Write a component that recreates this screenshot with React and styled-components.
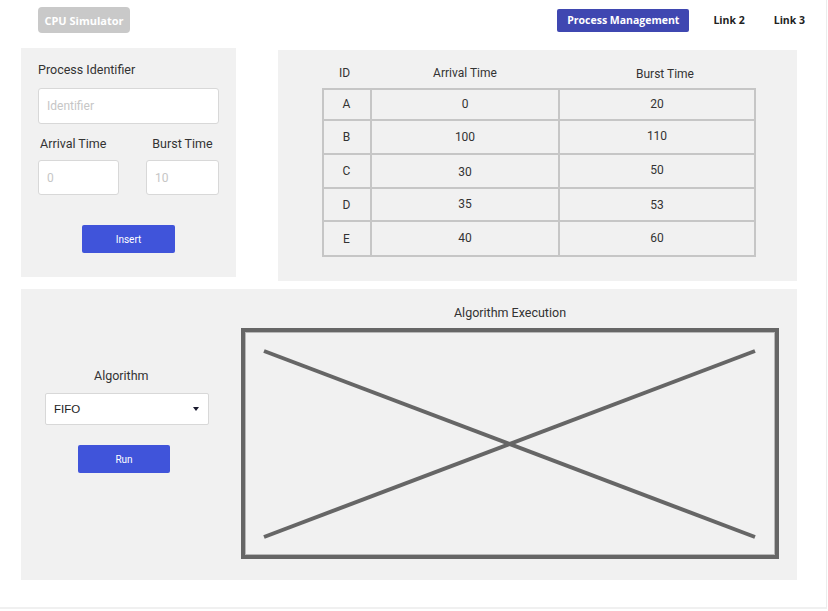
import React from "react";
import styled, { createGlobalStyle } from "styled-components";

const GlobalStyle = createGlobalStyle`
  body {
    margin: 0;
    background: #fff;
    font-family: Roboto, "Liberation Sans", sans-serif;
    color: #333;
  }
`;

const Page = styled.div`
  width: 826px;
  height: 607px;
  border-right: 1px solid #ececec;
  border-bottom: 2px solid #f0f0f0;
`;

const Nav = styled.div`
  display: flex;
  align-items: center;
  height: 40px;
  padding-left: 38px;
  font-family: "Open Sans", "Liberation Sans", sans-serif;
`;

const Brand = styled.div`
  background: #c9c9c9;
  color: #fff;
  font-weight: 700;
  font-size: 11px;
  height: 26px;
  width: 92px;
  border-radius: 4px;
  display: flex;
  align-items: center;
  justify-content: center;
`;

const NavLinks = styled.div`
  margin-left: auto;
  display: flex;
  align-items: center;
  padding-right: 21px;
`;

const NavLink = styled.div`
  font-size: 10.5px;
  font-weight: 700;
  height: 23px;
  display: flex;
  align-items: center;
  padding: 0 ${(p) => (p.active ? "10px" : "0")};
  margin-left: ${(p) => p.gap || 0}px;
  border-radius: 2px;
  background: ${(p) => (p.active ? "#3f47b1" : "transparent")};
  color: ${(p) => (p.active ? "#fff" : "#222")};
`;

const Content = styled.div`
  padding: 8px 0 0 21px;
`;

const TopRow = styled.div`
  display: flex;
  align-items: flex-start;
`;

const Panel = styled.div`
  background: #f1f1f1;
  width: ${(p) => p.w}px;
  height: ${(p) => p.h}px;
  margin-left: ${(p) => p.ml || 0}px;
  margin-top: ${(p) => p.mt || 0}px;
  box-sizing: border-box;
`;

const FormPanel = styled(Panel)`
  padding: 14px 17px 0 17px;
  display: flex;
  flex-direction: column;
`;

const Label = styled.div`
  font-size: 12.5px;
  line-height: 16px;
  color: #333;
  padding-left: ${(p) => p.pl || 0}px;
  text-align: ${(p) => p.align || "left"};
`;

const Input = styled.input`
  box-sizing: border-box;
  width: ${(p) => p.w}px;
  height: ${(p) => p.h || 36}px;
  margin-top: ${(p) => p.mt || 0}px;
  border: 1px solid #d8d8d8;
  border-radius: 3px;
  background: #fff;
  padding: 0 8px;
  font-family: Roboto, "Liberation Sans", sans-serif;
  font-size: 12px;
  outline: none;
  &::placeholder {
    color: #c6c6c6;
  }
`;

const FieldRow = styled.div`
  display: flex;
  justify-content: space-between;
  margin-top: 12px;
`;

const Field = styled.div`
  display: flex;
  flex-direction: column;
  width: ${(p) => p.w}px;
`;

const Button = styled.div`
  background: #4054da;
  color: #fff;
  font-size: 10px;
  width: ${(p) => p.w}px;
  height: 28px;
  border-radius: 2px;
  display: flex;
  align-items: center;
  justify-content: center;
  margin-top: ${(p) => p.mt || 0}px;
  margin-left: ${(p) => (p.ml == null ? "auto" : p.ml + "px")};
  margin-right: ${(p) => (p.ml == null ? "auto" : "0")};
`;

const TablePanel = styled(Panel)`
  padding: 8px 0 0 44px;
`;

const HeaderRow = styled.div`
  display: grid;
  grid-template-columns: 49px 188px 196px;
  height: 30px;
  align-items: center;
  font-size: 12px;
`;

const HeadCell = styled.div`
  text-align: center;
  margin-left: ${(p) => p.dx || 0}px;
  margin-top: ${(p) => p.dy || 0}px;
`;

const Table = styled.div`
  display: grid;
  grid-template-columns: 49px 188px 196px;
  width: 433px;
  border: 1px solid #c6c6c6;
  border-width: 1px 0 0 1px;
  box-shadow: 0 0 0 1px #c6c6c6 inset;
  font-size: 12px;
`;

const Cell = styled.div`
  height: ${(p) => p.h}px;
  box-sizing: border-box;
  border-right: 2px solid #c6c6c6;
  border-bottom: 2px solid #c6c6c6;
  display: flex;
  align-items: center;
  justify-content: center;
  padding-top: ${(p) => (p.dy > 0 ? p.dy * 2 : 0)}px;
  padding-bottom: ${(p) => (p.dy < 0 ? -p.dy * 2 : 0)}px;
  color: #333;
`;

const ExecPanel = styled(Panel)`
  margin-top: 8px;
  display: flex;
`;

const AlgoCol = styled.div`
  width: 220px;
  padding-top: 79px;
  display: flex;
  flex-direction: column;
  align-items: flex-start;
`;

const AlgoLabel = styled(Label)`
  margin-left: 73px;
`;

const Select = styled.div`
  box-sizing: border-box;
  width: 164px;
  height: 32px;
  margin-top: 9px;
  margin-left: 24px;
  background: #fff;
  border: 1px solid #d8d8d8;
  border-radius: 2px;
  display: flex;
  align-items: center;
  justify-content: space-between;
  padding: 0 9px 0 8px;
  font-family: "Liberation Sans", Arial, sans-serif;
  font-size: 11.5px;
  color: #222;
`;

const Caret = styled.span`
  width: 0;
  height: 0;
  border-left: 3.5px solid transparent;
  border-right: 3.5px solid transparent;
  border-top: 4px solid #1a1a2e;
`;

const ExecCol = styled.div`
  display: flex;
  flex-direction: column;
  align-items: center;
  width: 538px;
  padding-top: 16px;
`;

const Frame = styled.div`
  margin-top: 7px;
  width: 538px;
  height: 231px;
  box-sizing: border-box;
  border: 4px solid #666;
  box-shadow: inset 0 0 0 1px #b8b8b8;
  display: flex;
`;

const rows = [
  { id: "A", a: "0", b: "20", h: 32, da: 0, db: 0 },
  { id: "B", a: "100", b: "110", h: 34, da: 0, db: -1 },
  { id: "C", a: "30", b: "50", h: 34, da: 1, db: -1 },
  { id: "D", a: "35", b: "53", h: 33, da: -1, db: 0 },
  { id: "E", a: "40", b: "60", h: 35, da: -1, db: -1 },
];

export default function App() {
  return (
    <Page>
      <GlobalStyle />
      <Nav>
        <Brand>CPU Simulator</Brand>
        <NavLinks>
          <NavLink active>Process Management</NavLink>
          <NavLink gap={24}>Link 2</NavLink>
          <NavLink gap={29}>Link 3</NavLink>
        </NavLinks>
      </Nav>
      <Content>
        <TopRow>
          <FormPanel w={215} h={229}>
            <Label>Process Identifier</Label>
            <Input w={181} mt={10} placeholder="Identifier" />
            <FieldRow>
              <Field w={81}>
                <Label pl={2}>Arrival Time</Label>
                <Input w={81} h={35} mt={8} placeholder="0" />
              </Field>
              <Field w={73}>
                <Label align="center">Burst Time</Label>
                <Input w={73} h={35} mt={8} placeholder="10" />
              </Field>
            </FieldRow>
            <Button w={93} mt={30}>Insert</Button>
          </FormPanel>
          <TablePanel w={519} h={231} ml={42} mt={2}>
            <HeaderRow>
              <HeadCell dx={-4}>ID</HeadCell>
              <HeadCell>Arrival Time</HeadCell>
              <HeadCell dx={16} dy={2}>Burst Time</HeadCell>
            </HeaderRow>
            <Table>
              {rows.map((r) => (
                <React.Fragment key={r.id}>
                  <Cell h={r.h} dy={0}>{r.id}</Cell>
                  <Cell h={r.h} dy={r.da}>{r.a}</Cell>
                  <Cell h={r.h} dy={r.db}>{r.b}</Cell>
                </React.Fragment>
              ))}
            </Table>
          </TablePanel>
        </TopRow>
        <ExecPanel w={776} h={291}>
          <AlgoCol>
            <AlgoLabel>Algorithm</AlgoLabel>
            <Select>
              <span>FIFO</span>
              <Caret />
            </Select>
            <Button w={92} mt={20} ml={57}>Run</Button>
          </AlgoCol>
          <ExecCol>
            <Label>Algorithm Execution</Label>
            <Frame>
              <svg width="530" height="223" viewBox="0 0 530 223">
                <line x1="19" y1="19" x2="510" y2="205" stroke="#666" strokeWidth="4" />
                <line x1="19" y1="205" x2="510" y2="19" stroke="#666" strokeWidth="4" />
              </svg>
            </Frame>
          </ExecCol>
        </ExecPanel>
      </Content>
    </Page>
  );
}
